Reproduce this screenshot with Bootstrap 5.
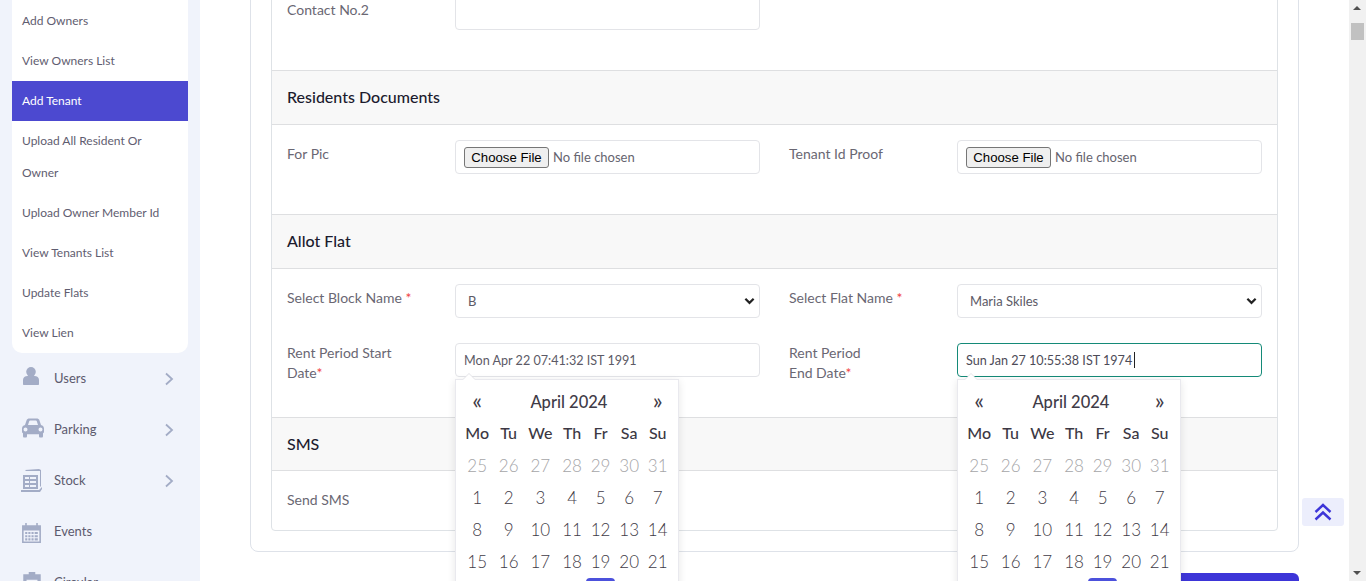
<!DOCTYPE html>
<html lang="en">
<head>
    <meta charset="UTF-8">
    <meta name="viewport" content="width=device-width, initial-scale=1.0">
    <link href="https://cdn.jsdelivr.net/npm/bootstrap@5.3.0/dist/css/bootstrap.min.css" rel="stylesheet">
    <title>Add Tenant</title>
    <style>
        html, body { height: 581px; overflow: hidden; }
        body { font-family: Lato, "Open Sans", sans-serif; color: #6a6773; background: #fff; font-size: 14px; }
        .page-wrap { height: 581px; }

        /* sidebar */
        .side-col { width: 200px; background: #f0f3fb; flex: none; padding: 0 12px; overflow: hidden; }
        .sub-panel { background: #fff; border-radius: 0 0 10px 10px; padding-top: 1px; }
        .sub-link { display: block; padding: 4px 10px; line-height: 32px; font-size: 12px; color: #5f5d70; text-decoration: none; }
        .sub-link.is-active { background: #4c49d0; color: #fff; }
        .side-item { height: 51px; color: #5c5a6e; font-size: 13px; text-decoration: none; padding-left: 8px; padding-right: 14px; }
        .side-ico { width: 34px; flex: none; }
        .side-ico svg { display: block; fill: #a3acc6; }
        .ico-user { margin-bottom: 5px; }
        .ico-car { margin-left: 1px; margin-bottom: 4px; }
        .ico-stock { margin-left: 1px; }
        .ico-cal { margin-left: 1px; margin-top: 1px; }
        .ico-clip { margin-left: 1px; margin-top: 2px; }
        .side-arrow { stroke: #a3acc6; fill: none; stroke-width: 1.8; }

        /* main */
        .main-col { flex: 1 1 auto; min-width: 0; padding: 0 50px; margin-top: -41px; position: relative; }
        .outer-box { border: 1px solid #dee2e9; border-radius: 8px; padding: 20px; }
        .inner-box { border: 1px solid #dee2e6; border-radius: 4px; }
        .sect-head { background: #f8f8f8; border-top: 1px solid #dedfe1; border-bottom: 1px solid #dedfe1; height: 55px; padding: 0 15px; font-size: 16px; font-weight: 500; color: #1c1b2e; line-height: 51px; }
        .sect-head.short { height: 54px; }
        .sect-body { padding: 15px; }
        .sect-body.last { height: 59px; padding-bottom: 0; }
        .form-line { display: flex; gap: 29px; margin-bottom: 25px; }
        .field-pair { width: 473px; display: flex; }
        .field-label { width: 168px; flex: none; font-size: 14px; line-height: 20px; padding-top: 4px; color: #6a6773; margin: 0; }
        .field-label.two { padding-top: 0; height: 34px; }
        .req { color: #ef4444; }
        .field-box { width: 305px; position: relative; }
        .field-box .form-control, .field-box .form-select { height: 34px; min-height: 34px; font-size: 12.6px; color: #5c5a66; border-color: #e3e4e8; border-radius: 4px; padding: 1px 8px 0; box-shadow: none; }
        .field-box .form-select { padding-left: 12px; font-size: 13px; padding-top: 2px; background-image: url("data:image/svg+xml,%3csvg xmlns='http://www.w3.org/2000/svg' viewBox='0 0 12 8'%3e%3cpath fill='none' stroke='%23222' stroke-width='2.4' d='M1.500 1.500l4.500 4.500 4.500-4.500'/%3e%3c/svg%3e"); background-position: right 4px center; background-size: 11px 8px; }
        .field-box .form-control.is-on { border-color: #148a78; color: #4d4b57; }
        .caret-bar { position: absolute; left: 177px; top: 9px; width: 1px; height: 16px; background: #222; }
        .file-box { height: 34px; border: 1px solid #e3e4e8; border-radius: 4px; padding: 1px 8px 0; display: flex; align-items: center; font-size: 13px; color: #66646f; }
        .file-btn { font-family: "Liberation Sans", Arial, sans-serif; font-size: 13.2px; color: #000; background: #efefef; border: 1px solid #767676; border-radius: 3px; height: 21px; width: 85px; padding: 0; margin-right: 4px; line-height: 18px; }
        .save-row { margin-top: 21px; text-align: right; }
        .save-btn { background: #3d35d8; color: #fff; width: 200px; height: 40px; border: 0; border-radius: 6px; }

        /* calendar popup */
        .cal-pop { position: absolute; left: 0; top: 36px; width: 224px; background: #fff; border: 1px solid #e9e9ee; box-shadow: 0 2px 8px rgba(0,0,0,.1); z-index: 5; padding: 6px 6px 6px 4px; color: #3f3b47; font-size: 17px; font-weight: 300; }
        .cal-pop::before { content: ""; position: absolute; left: 7px; top: -6px; border-left: 6px solid transparent; border-right: 6px solid transparent; border-bottom: 6px solid #fff; filter: drop-shadow(0 -1px 0 #e4e4e8); }
        .cal-pop table { width: 100%; text-align: center; border-collapse: collapse; }
        .cal-pop td, .cal-pop th { height: 32px; padding: 0; font-weight: 300; }
        .cal-pop thead th.dow { font-weight: 500; color: #3c3844; font-size: 16px; padding-bottom: 2px; }
        .cal-pop thead th.nav-arr { font-size: 23px; font-weight: 400; line-height: 1; padding-bottom: 3px; }
        .cal-pop thead th.month { font-weight: 500; font-size: 16.500px; }
        .cal-pop .off { color: #a5a5a8; }
        .cal-pop .today { background: #4c51dc; color: #fff; border-radius: 4px; }

        /* scrollbar + top button */
        .fake-scroll { width: 17px; flex: none; background: #f1f1f1; position: relative; }
        .fake-thumb { position: absolute; left: 2px; right: 2px; top: 23px; height: 17px; background: #c1c1c1; }
        .arrow-up, .arrow-down { position: absolute; left: 4px; border-left: 4px solid transparent; border-right: 4px solid transparent; }
        .arrow-up { top: 6px; border-bottom: 4px solid #505050; }
        .arrow-down { bottom: 6px; border-top: 4px solid #505050; }
        .top-btn { position: absolute; left: 1302px; top: 498px; width: 42px; height: 28px; background: #eceefc; border-radius: 3px; z-index: 6; display: flex; align-items: center; justify-content: center; }
    </style>
</head>
<body>
    <div class="page-wrap d-flex">
        <div class="side-col">
            <div class="sub-panel">
                <a class="sub-link" href="#">Add Owners</a>
                <a class="sub-link" href="#">View Owners List</a>
                <a class="sub-link is-active" href="#">Add Tenant</a>
                <a class="sub-link" href="#">Upload All Resident Or Owner</a>
                <a class="sub-link" href="#">Upload Owner Member Id</a>
                <a class="sub-link" href="#">View Tenants List</a>
                <a class="sub-link" href="#">Update Flats</a>
                <a class="sub-link" href="#">View Lien</a>
            </div>
            <a class="side-item d-flex align-items-center" href="#">
                <span class="side-ico"><svg class="ico-user" width="22" height="18" viewBox="0 0 22 18"><circle cx="11" cy="4.800" r="4.800"/><path d="M3 17v-4c0-2.500 2-4 4.500-4h7c2.500 0 4.500 1.500 4.500 4v4c0 .6-.4 1-1 1H4c-.6 0-1-.4-1-1z"/></svg></span>
                <span class="flex-grow-1">Users</span>
                <svg class="side-arrow" width="10" height="14" viewBox="0 0 10 14"><path d="M2 1.500l6 5.500-6 5.500"/></svg>
            </a>
            <a class="side-item d-flex align-items-center" href="#">
                <span class="side-ico"><svg class="ico-car" width="24" height="20" viewBox="0 0 24 20"><path d="M5.500 2.500C6 1 7 .5 8.500.5h7c1.500 0 2.500.5 3 2l1.500 4.500c1.500.3 3 1.500 3 3.500v3c0 1-.5 1.500-1 1.800V18c0 1-.5 1.500-1.300 1.500h-1.400c-.8 0-1.300-.5-1.300-1.500v-1.800H6V18c0 1-.5 1.500-1.300 1.500H3.300C2.500 19.500 2 19 2 18v-2.700c-.5-.3-1-.8-1-1.800v-3c0-2 1.500-3.200 3-3.500zM7 7h10l-1.200-3.800c-.1-.5-.5-.7-1-.7H9.200c-.5 0-.9.200-1 .7zM4.500 9.500a2 2 0 1 0 0 4 2 2 0 0 0 0-4zm15 0a2 2 0 1 0 0 4 2 2 0 0 0 0-4z" fill-rule="evenodd"/></svg></span>
                <span class="flex-grow-1">Parking</span>
                <svg class="side-arrow" width="10" height="14" viewBox="0 0 10 14"><path d="M2 1.500l6 5.500-6 5.500"/></svg>
            </a>
            <a class="side-item d-flex align-items-center" href="#">
                <span class="side-ico"><svg class="ico-stock" width="22" height="23" viewBox="0 0 22 23"><path d="M4 1l14-1 2 1v16l-1 1V2H5zM2 6h15v14H2zm2 2v2h4V8zm5 0v2h6V8zM4 12v2h4v-2zm5 0v2h6v-2zM4 16v2h4v-2zm5 0v2h6v-2z" fill-rule="evenodd"/><path d="M0 21h18l3-3v2l-2 3H0z"/></svg></span>
                <span class="flex-grow-1">Stock</span>
                <svg class="side-arrow" width="10" height="14" viewBox="0 0 10 14"><path d="M2 1.500l6 5.500-6 5.500"/></svg>
            </a>
            <a class="side-item d-flex align-items-center" href="#">
                <span class="side-ico"><svg class="ico-cal" width="21" height="21" viewBox="0 0 20 20"><path d="M1 3h3V1h1.500v2h9V1H16v2h3v17H1zm1.500 5v10.500h15V8zM4 9.500h2v2H4zm3 0h2v2H7zm3 0h2v2h-2zm3 0h3v2h-3zM4 12.500h2v2H4zm3 0h2v2H7zm3 0h2v2h-2zm3 0h3v2h-3zM4 15.500h2v2H4zm3 0h2v2H7zm3 0h2v2h-2zm3 0h3v2h-3z" fill-rule="evenodd"/></svg></span>
                <span class="flex-grow-1">Events</span>
            </a>
            <a class="side-item d-flex align-items-center" href="#">
                <span class="side-ico"><svg class="ico-clip" width="22" height="24" viewBox="0 0 20 22"><path d="M7 0h6v2h5v20H2V2h5zM5 7v2h10V7zm0 4v2h10v-2zm0 4v2h10v-2z" fill-rule="evenodd"/></svg></span>
                <span class="flex-grow-1">Circular</span>
            </a>
        </div>

        <div class="main-col">
            <div class="outer-box">
                <div class="inner-box">
                    <div class="sect-body">
                        <div class="form-line">
                            <div class="field-pair">
                                <label class="field-label">Contact No.2</label>
                                <div class="field-box"><input class="form-control" type="text"></div>
                            </div>
                        </div>
                    </div>

                    <div class="sect-head">Residents Documents</div>
                    <div class="sect-body">
                        <div class="form-line">
                            <div class="field-pair">
                                <label class="field-label">For Pic</label>
                                <div class="field-box"><div class="file-box"><button class="file-btn" type="button">Choose File</button>No file chosen</div></div>
                            </div>
                            <div class="field-pair">
                                <label class="field-label">Tenant Id Proof</label>
                                <div class="field-box"><div class="file-box"><button class="file-btn" type="button">Choose File</button>No file chosen</div></div>
                            </div>
                        </div>
                    </div>

                    <div class="sect-head">Allot Flat</div>
                    <div class="sect-body">
                        <div class="form-line">
                            <div class="field-pair">
                                <label class="field-label">Select Block Name <span class="req">*</span></label>
                                <div class="field-box"><select class="form-select"><option>B</option></select></div>
                            </div>
                            <div class="field-pair">
                                <label class="field-label">Select Flat Name <span class="req">*</span></label>
                                <div class="field-box"><select class="form-select"><option>Maria Skiles</option></select></div>
                            </div>
                        </div>
                        <div class="form-line">
                            <div class="field-pair">
                                <label class="field-label two">Rent Period Start<br>Date<span class="req">*</span></label>
                                <div class="field-box">
                                    <input class="form-control" type="text" value="Mon Apr 22 07:41:32 IST 1991">
                                    <div class="cal-pop" data-cal></div>
                                </div>
                            </div>
                            <div class="field-pair">
                                <label class="field-label two">Rent Period<br>End Date<span class="req">*</span></label>
                                <div class="field-box">
                                    <input class="form-control is-on" type="text" value="Sun Jan 27 10:55:38 IST 1974">
                                    <span class="caret-bar"></span>
                                    <div class="cal-pop" data-cal></div>
                                </div>
                            </div>
                        </div>
                    </div>

                    <div class="sect-head short">SMS</div>
                    <div class="sect-body last">
                        <div class="field-pair"><label class="field-label">Send SMS</label></div>
                    </div>
                </div>
            </div>
            <div class="save-row"><button class="save-btn" type="button">Submit</button></div>
        </div>

        <div class="fake-scroll">
            <span class="arrow-up"></span>
            <span class="fake-thumb"></span>
            <span class="arrow-down"></span>
        </div>
    </div>

    <a class="top-btn" href="#">
        <svg width="18" height="18" viewBox="0 0 18 18" fill="none" stroke="#3d35d8" stroke-width="2.400"><path d="M1.500 9l7.500-7 7.500 7M1.500 16.500l7.500-7 7.500 7"/></svg>
    </a>

    <script src="https://cdn.jsdelivr.net/npm/bootstrap@5.3.0/dist/js/bootstrap.bundle.min.js"></script>
    <script>
        // both date pickers show the same month
        const dows = ['Mo', 'Tu', 'We', 'Th', 'Fr', 'Sa', 'Su'];
        const weeks = [[25, 26, 27, 28, 29, 30, 31], [1, 2, 3, 4, 5, 6, 7], [8, 9, 10, 11, 12, 13, 14], [15, 16, 17, 18, 19, 20, 21], [22, 23, 24, 25, 26, 27, 28]];

        document.querySelectorAll('[data-cal]').forEach(el => {
            let html = '<table><thead><tr><th class="nav-arr">«</th><th colspan="5" class="month">April 2024</th><th class="nav-arr">»</th></tr><tr>';
            dows.forEach(d => { html += `<th class="dow">${d}</th>`; });
            html += '</tr></thead><tbody>';
            weeks.forEach((week, w) => {
                html += '<tr>';
                week.forEach(day => {
                    const cls = w === 0 ? 'off' : (w === 4 && day === 26 ? 'today' : '');
                    html += `<td class="${cls}">${day}</td>`;
                });
                html += '</tr>';
            });
            el.innerHTML = html + '</tbody></table>';
        });
    </script>
</body>
</html>
